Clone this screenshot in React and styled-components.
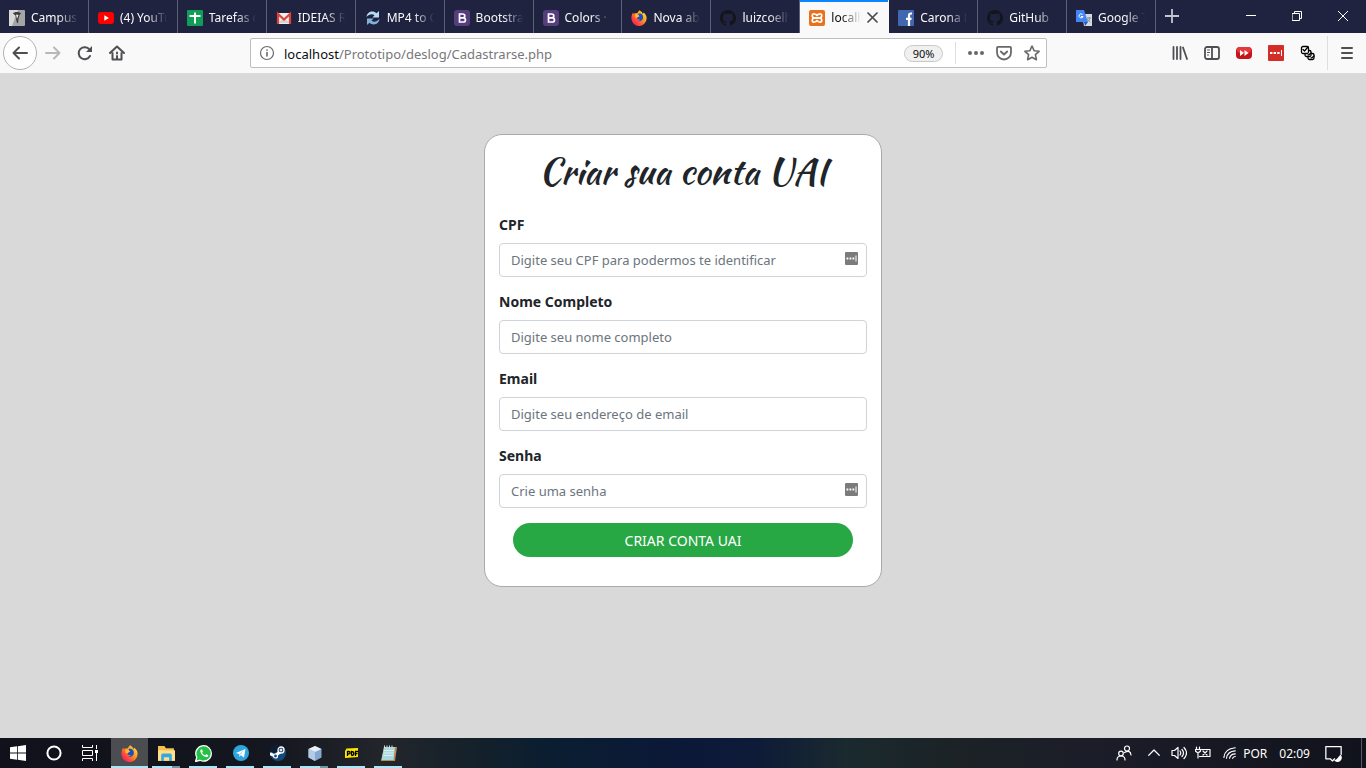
import React from "react";
import styled, { createGlobalStyle, css } from "styled-components";

const ui = '"Segoe UI", "Noto Sans", "Open Sans", sans-serif';

const GlobalStyle = createGlobalStyle`
  * { box-sizing: border-box; }
  html, body { margin: 0; padding: 0; }
  body { font-family: ${ui}; background: #d9d9d9; }
  button, input { font-family: inherit; margin: 0; }
  svg { display: block; flex: none; }
`;

const Screen = styled.div`
  min-height: 100vh;
  display: flex;
  flex-direction: column;
`;

const TitleBar = styled.header`
  display: flex;
  height: 33px;
  background: #202340;
`;

const TabList = styled.nav`
  display: flex;
  flex: 1;
  min-width: 0;
`;

const Tab = styled.a`
  flex: 1 1 0;
  min-width: 0;
  display: flex;
  align-items: center;
  gap: 6px;
  padding: 2px 10px 0 9px;
  font-size: 12px;
  color: #f9f9fa;
  text-decoration: none;
  border-right: 1px solid #5d5f75;
  ${(p) =>
    p.$active &&
    css`
      background: #f9f9fa;
      color: #0c0c0d;
      border-right-color: #f9f9fa;
      box-shadow: inset 0 2px #0a84ff;
    `}
`;

const TabTitle = styled.span`
  flex: 1;
  min-width: 0;
  overflow: hidden;
  white-space: nowrap;
  mask-image: linear-gradient(to left, transparent, #000 20px);
`;

const IconButton = styled.button`
  display: flex;
  align-items: center;
  justify-content: center;
  flex: none;
  width: ${(p) => p.$w || 32}px;
  height: ${(p) => p.$h || 32}px;
  padding: 0;
  border: 0;
  background: none;
  color: ${(p) => p.$color || "#4f4f53"};
`;

const WindowButtons = styled.div`
  display: flex;
  margin-left: 40px;
`;

const NavBar = styled.div`
  display: flex;
  align-items: center;
  height: 41px;
  padding: 0 3px;
  background: #f9f9fa;
  border-bottom: 1px solid #dcdcdd;
`;

const BackButton = styled(IconButton)`
  border: 1px solid #b1b1b3;
  border-radius: 50%;
  background: #fff;
`;

const Spring = styled.div`
  flex: 0 1 117px;
`;

const AddressBar = styled.form`
  display: flex;
  align-items: center;
  flex: 1;
  min-width: 0;
  height: 30px;
  padding: 0 0 0 8px;
  background: #fff;
  border: 1px solid #bebebf;
  border-radius: 2px;
`;

const Address = styled.span`
  flex: 1;
  min-width: 0;
  margin-left: 9px;
  padding-top: 2px;
  font-size: 13px;
  line-height: 26px;
  color: #77777a;
  white-space: nowrap;
  overflow: hidden;
  b { font-weight: 400; color: #0c0c0d; }
`;

const ZoomLevel = styled.button`
  width: 39px;
  height: 17px;
  padding: 0;
  margin-right: 12px;
  border: 1px solid #c8c8c9;
  border-radius: 9px;
  background: #f0f0f1;
  font-size: 11px;
  line-height: 15px;
  color: #0c0c0d;
`;

const Divider = styled.span`
  width: 1px;
  height: ${(p) => p.$h}px;
  margin: 0 ${(p) => p.$right || 0}px 0 ${(p) => p.$left || 0}px;
  background: ${(p) => p.$color || "#dededf"};
`;

const Page = styled.main`
  flex: 1;
  padding: 60px 16px;
  background: #d9d9d9;
`;

const Card = styled.form`
  width: 100%;
  max-width: 398px;
  margin: 0 auto;
  padding: 12px 14px 29px;
  background: #fff;
  border: 1px solid #a9a9a9;
  border-radius: 18px;
`;

const Title = styled.h1`
  margin: 0 0 19px;
  font: 400 36px/48px "Kaushan Script", cursive;
  color: #212529;
  text-align: center;
  white-space: nowrap;
`;

const Field = styled.div`
  margin-bottom: 14px;
`;

const FieldLabel = styled.label`
  display: block;
  margin-bottom: 7px;
  font-size: 14px;
  font-weight: 700;
  line-height: 22px;
  color: #212529;
`;

const InputFrame = styled.div`
  display: flex;
  height: 34px;
  padding-right: 8px;
  border: 1px solid #ced4da;
  border-radius: 4px;
  svg { margin-top: 8px; }
`;

const Input = styled.input`
  flex: 1;
  min-width: 0;
  padding: 0 11px;
  border: 0;
  outline: 0;
  background: transparent;
  font-size: 13px;
  color: #495057;
  &::placeholder { color: #6c757d; opacity: 1; }
`;

const Submit = styled.button`
  display: block;
  width: calc(100% - 28px);
  height: 34px;
  margin: 15px auto 0;
  padding: 0;
  border: 0;
  border-radius: 17px;
  background: #28a745;
  color: #fff;
  font-size: 14px;
`;

const TaskBar = styled.footer`
  display: flex;
  justify-content: space-between;
  height: 30px;
  background: linear-gradient(90deg, #10111a 0%, #14171f 20%, #22262b 28%, #16212a 34%, #0a1e30 40%, #0b1838 50%, #0d1a38 55%, #1a2a2e 62%, #1c2226 70%, #1b1d28 80%, #10121c 100%);
`;

const TaskGroup = styled.div`
  display: flex;
  align-items: center;
  gap: ${(p) => p.$gap || 0}px;
`;

const AppButton = styled.button`
  position: relative;
  display: flex;
  align-items: center;
  justify-content: center;
  width: ${(p) => p.$w || 37}px;
  height: 30px;
  padding: 0;
  border: 0;
  background: ${(p) => (p.$active ? "#4b4d51" : "none")};
  color: #fff;
  &::after {
    content: "";
    display: ${(p) => (p.$running ? "block" : "none")};
    position: absolute;
    left: ${(p) => (p.$active ? 0 : 4)}px;
    right: ${(p) => (p.$active ? 0 : 5)}px;
    bottom: 0;
    height: 2px;
    background: ${(p) => (p.$multi ? "linear-gradient(90deg, #a6e8fa 70%, #6a98a6 70%)" : "#a6e8fa")};
  }
`;

const TrayText = styled.span`
  font-size: 12px;
  color: #fff;
  margin-right: ${(p) => p.$gap}px;
  white-space: nowrap;
`;

const Svg = ({ s = 16, w, h, vb = "0 0 16 16", children, ...rest }) => (
  <svg width={w || s} height={h || s} viewBox={vb} fill="none" aria-hidden="true" {...rest}>
    {children}
  </svg>
);
const Line = (props) => (
  <Svg stroke="currentColor" strokeWidth="1.8" strokeLinecap="round" strokeLinejoin="round" {...props} />
);

const Campus = () => (
  <Svg><rect width="16" height="16" rx="1" fill="#a5a5a5" /><path d="M0 0h9L3 16H0z" fill="#d8d8d8" /><path d="M4 3.500c1-2 7-2 8 0l-1.500 1.500L9.500 9 9 13H8L7 9 6.500 5.500z" fill="#3c3c3c" /><path d="M7 4.500l2.500.5L8 9z" fill="#eee" /></Svg>
);
const YouTube = () => (
  <Svg><rect y="2" width="16" height="12" rx="3" fill="#f00" /><path d="M6.300 5.200 11 8l-4.700 2.800z" fill="#fff" /></Svg>
);
const Sheets = () => (
  <Svg><rect width="16" height="16" rx="1" fill="#0f9d58" /><path d="M8 2.500v11M2.500 6h11" stroke="#fff" strokeWidth="2" /></Svg>
);
const Gmail = () => (
  <Svg><path d="M1 3h14v11H1z" fill="#eee" /><path d="M2 13 8 8l6 5z" fill="#d5d5d5" /><path d="M2 14V4L8 9.500 14 4V14" stroke="#db4437" strokeWidth="2.200" /></Svg>
);
const Sync = () => (
  <Svg><path d="M1.500 7C2 1.500 8 0 11.500 3.200L14 1v6.500H7.500L9.500 5.300C7 3.500 4 4.400 1.500 7z" fill="#b4dcf5" /><path d="M14.500 9C14 14.500 8 16 4.500 12.800L2 15V8.500h6.500l-2 2.200c2.500 1.800 5.500.9 8-1.700z" fill="#7fb2da" /></Svg>
);
const Bootstrap = () => (
  <Svg><rect width="16" height="16" rx="3" fill="#563d7c" /><path d="M5.500 4h3.200c2.800 0 2.800 3.800 0 3.800H5.500zM5.500 7.800h3.700c3 0 3 4.200 0 4.200H5.500z" stroke="#fff" strokeWidth="1.700" /></Svg>
);
const Firefox = ({ s = 16 }) => (
  <Svg s={s}>
    <defs><linearGradient id="ff" x1="1" y1="0" x2="0" y2="1"><stop stopColor="#fff44f" /><stop offset=".4" stopColor="#ff9a1f" /><stop offset=".75" stopColor="#ff3647" /><stop offset="1" stopColor="#e31587" /></linearGradient></defs>
    <path d="M8.500.3c2 1.200 3 2.300 3.300 3.700l.9-1.500c2 1.800 3 3.600 2.900 6A7.600 7.600 0 0 1 .4 8.400C.3 6 1 3.800 2.200 2.400l.5 1.500C4 2.900 5.400 2.900 6.400 3 7 1.900 7.700 1.100 8.500.3z" fill="url(#ff)" />
    <path d="M7.500 3.600c3.500-.6 5 2 4.500 4.600-.5 2.500-3.500 3.800-6 2.600 2 .2 3-.6 3.300-1.400-1.600.1-3-.1-3.200-1.500C6 7 7.500 7 8.500 6.300 7.500 6 7 5 7.500 3.600z" fill="#174fc4" />
    <path d="M4 4.400C6 4 7.800 5 8.500 6.300 7.300 6.700 6 7 6.200 8l-2-.8z" fill="#ffbd2e" />
  </Svg>
);
const GitHub = () => (
  <Svg><path fill="#14151b" d="M8 0C3.580 0 0 3.580 0 8c0 3.540 2.290 6.530 5.470 7.590.4.070.55-.17.55-.38v-1.490c-2.010.37-2.530-.49-2.690-.94-.09-.23-.48-.94-.82-1.130-.28-.15-.68-.52-.01-.53.63-.01 1.080.58 1.230.82.72 1.210 1.870.87 2.330.66.07-.52.28-.87.51-1.070-1.780-.2-3.640-.89-3.640-3.950 0-.87.31-1.590.82-2.150-.08-.2-.36-1.020.08-2.120 0 0 .67-.21 2.200.82a7.600 7.600 0 0 1 4 0c1.530-1.040 2.200-.82 2.200-.82.44 1.100.16 1.920.08 2.120.51.56.82 1.270.82 2.150 0 3.070-1.870 3.750-3.650 3.950.29.25.54.73.54 1.480v2.200c0 .21.15.46.55.38A8 8 0 0 0 8 0z" /></Svg>
);
const Xampp = () => (
  <Svg><rect width="16" height="16" rx="2" fill="#e9711c" /><path d="M6.500 4.200Q3.300 3 3.300 5.500T5 7.800h6q1.700 0 1.700-2.300T9.500 4.200L8 5.500 6.500 4.200M6.500 11.800Q3.300 13 3.300 10.500T5 8.200h6q1.700 0 1.700 2.300T9.500 11.800L8 10.500 6.500 11.800" stroke="#fff" strokeWidth="1.700" /></Svg>
);
const Facebook = () => (
  <Svg><rect width="16" height="16" rx="1" fill="#4267b2" /><path d="M14 3.500h-1c-1.500 0-2 .7-2 2V16M8 8.800h5.500" stroke="#fff" strokeWidth="2.200" /></Svg>
);
const Translate = () => (
  <Svg><path d="M6 4h10v12H8z" fill="#d5dbe0" /><path d="M0 0h8l4 12H0z" fill="#4285f4" /><path d="M8 12h4l-3 4z" fill="#2358b8" /><path d="M6.500 4.500A2 2 0 1 0 7 6.500H5" stroke="#fff" /><path d="M11 8h4m-2-1v1m1 0c-.5 2-1.500 3-3 4m.5-3c.5 1.500 1.500 2.500 3 3" stroke="#71808c" strokeWidth=".8" /></Svg>
);

const tabs = [
  ["Campus", Campus],
  ["(4) YouTu", YouTube],
  ["Tarefas d", Sheets],
  ["IDEIAS RA", Gmail],
  ["MP4 to G", Sync],
  ["Bootstrap", Bootstrap],
  ["Colors · B", Bootstrap],
  ["Nova aba", Firefox],
  ["luizcoelh", GitHub],
  ["localh", Xampp, true],
  ["Carona L", Facebook],
  ["GitHub", GitHub],
  ["Google T", Translate],
];

const Dots = () => (
  <Svg s={13} vb="0 0 13 13"><rect width="13" height="13" rx="1" fill="#7b7b7b" /><path d="M1.500 6.500h1.800M4.500 6.500h1.800M7.500 6.500h1.800" stroke="#fff" strokeWidth="1.800" /><path d="M11 3.500v6" stroke="#fff" /></Svg>
);

const fields = [
  ["cpf", "CPF", "Digite seu CPF para podermos te identificar", "text", true],
  ["nome", "Nome Completo", "Digite seu nome completo", "text"],
  ["email", "Email", "Digite seu endereço de email", "email"],
  ["senha", "Senha", "Crie uma senha", "password", true],
];

const Windows = () => <Svg><path fill="#fff" d="M0 2.300 7 1.300V7.600H0zM7.800 1.200 16 0v7.600H7.800zM0 8.400h7v6.300l-7-1zM7.800 8.400H16V16l-8.200-1.200z" /></Svg>;
const Cortana = () => <Svg><circle cx="8" cy="8" r="6.600" stroke="#fff" strokeWidth="2" /></Svg>;
const TaskView = () => <Svg stroke="#fff"><path d="M.5 0v2.500h10V0M.5 16v-2.500h10V16M.5 5.500h10v5H.5zM14.500 0v4M14.500 8v8" /><path d="M13 5h3v3h-3z" fill="#fff" stroke="none" /></Svg>;
const Folder = () => <Svg s={17}><path d="M0 1h6l1.500 2H15v11H0z" fill="#f5c04d" /><path d="M0 5h16v10H0z" fill="#ffe08a" /><path d="M3 15V9.500Q3 8 4.500 8h7Q13 8 13 9.500V15h-2.500v-3.500h-5V15z" fill="#36a8e0" /></Svg>;
const WhatsApp = () => <Svg s={17}><path d="M.5 15.500 1.700 11.500A7.300 7.300 0 1 1 4.700 14.400z" fill="#25c045" stroke="#fff" strokeWidth="1.200" /><path d="M5.500 4.200c-2 1.800 2.500 8 6 7 1-.4 1.200-1.200.8-1.700l-1.600-.8-1.200 1C8 9.200 7 8 6.700 7l.7-1-.7-1.700z" fill="#fff" /></Svg>;
const Telegram = () => <Svg><circle cx="8" cy="8" r="8" fill="#2ca5e0" /><path d="M2.800 8 12.500 4 11 12.500 7.800 10.300 6.300 11.800 6 9z" fill="#fff" /><path d="m6 9 5-4-3.500 4.500-1.200 2.300z" fill="#b7d9ec" /></Svg>;
const Steam = () => <Svg><circle cx="8" cy="8" r="8" fill="#134a7c" /><path d="M.5 4.500A8 8 0 0 1 12 1L9 5 5 8 0 7z" fill="#0d1d33" /><path d="m0 8.500 5 2.500 5.500-4.500" stroke="#fff" strokeWidth="3" /><circle cx="11" cy="5" r="3" fill="#1c3450" stroke="#fff" strokeWidth="1.300" /><circle cx="11" cy="5" r="1.500" fill="#dfe6ee" /><circle cx="5.500" cy="11" r="2" fill="#134a7c" stroke="#fff" strokeWidth="1.200" /></Svg>;
const Cube = () => <Svg><path d="m8 1 6.500 3v8.500L8 16l-6.500-3.500V4z" fill="#86a7cf" /><path d="m8 1 6.500 3L8 7 1.500 4z" fill="#e6eef6" /><path d="M1.500 4 8 7v9l-6.500-3.500z" fill="#b5cae4" /></Svg>;
const Pdf = () => <Svg><path d="M2.500 3.500 14 3v9L1 13V6z" fill="#ffe800" /><path d="M3.500 11V6.500H5q1 0 1 1.200T5 8.900H3.500M7.500 10.500v-4q2.300 0 2.300 2t-2.300 2M11.500 11V6.500H14M11.500 8.700h2" stroke="#000" strokeWidth="1.300" /></Svg>;
const Notepad = () => <Svg><path d="M3 2h13l-2 14H0z" fill="#b98b55" /><path d="M3 2h11l-1.500 13H.5z" fill="#a8d7dc" /><path d="M3 5.500h10M2.700 8h10M2.300 10.500h10" stroke="#d8f0f2" /><path d="M3.500.5v3m2.500-3v3m2.500-3v3m2.500-3v3" stroke="#ddd" /></Svg>;

const apps = [
  ["Firefox", () => <Firefox s={17} />, false, true],
  ["Explorador", Folder, true],
  ["WhatsApp", WhatsApp],
  ["Telegram", Telegram],
  ["Steam", Steam],
  ["VirtualBox", Cube, true],
  ["PDF", Pdf],
  ["Bloco de notas", Notepad],
];

export default function App() {
  return (
    <Screen>
      <GlobalStyle />
      <TitleBar>
        <TabList aria-label="Abas">
          {tabs.map(([name, Icon, active], i) => (
            <Tab key={i} href="#" $active={active}>
              <Icon />
              <TabTitle>{name}</TabTitle>
              {active && <Line s={11} vb="0 0 11 11" stroke="#4a4a4f" strokeWidth="1.700"><path d="m1 1 9 9M10 1 1 10" /></Line>}
            </Tab>
          ))}
        </TabList>
        <IconButton $color="#c5c6ce" aria-label="Nova aba"><Line s={14} vb="0 0 14 14" strokeLinecap="butt"><path d="M7 0v14M0 7h14" /></Line></IconButton>
        <WindowButtons>
          <IconButton $w={46} $color="#fff" aria-label="Minimizar"><Line s={10} vb="0 0 10 10" strokeWidth="1"><path d="M0 4.500h10" /></Line></IconButton>
          <IconButton $w={46} $color="#fff" aria-label="Restaurar"><Line s={10} vb="0 0 10 10" strokeWidth="1" strokeLinejoin="miter"><path d="M.5 2.500h7v7h-7zM2.500 2.500v-2h7v7h-2" /></Line></IconButton>
          <IconButton $w={46} $color="#fff" aria-label="Fechar"><Line s={10} vb="0 0 10 10" strokeWidth="1"><path d="m0 0 10 10M10 0 0 10" /></Line></IconButton>
        </WindowButtons>
      </TitleBar>
      <NavBar>
        <BackButton $w={34} $h={34} aria-label="Voltar"><Line strokeWidth="2"><path d="M15 8H1.500M7 2.500 1.500 8 7 13.500" /></Line></BackButton>
        <IconButton $color="#b8b8ba" aria-label="Avançar"><Line strokeWidth="2"><path d="M1 8h13.500M9 2.500 14.500 8 9 13.500" /></Line></IconButton>
        <IconButton aria-label="Recarregar"><Line strokeWidth="2"><path d="M13 11A6 6 0 1 1 12.500 4.500" /><path d="M15 1v6H9z" fill="currentColor" stroke="none" /></Line></IconButton>
        <IconButton aria-label="Início"><Line strokeWidth="2"><path d="m1 8 7-6.500L15 8M3.500 8v6.500h9V8M8 14.500V11" /><path d="M8 7.500v1" /></Line></IconButton>
        <Spring />
        <AddressBar onSubmit={(e) => e.preventDefault()}>
          <Line color="#6a6a6d" strokeWidth="1.200"><circle cx="8" cy="8" r="6.500" /><path d="M8 7.500v3.500M8 5v.2" strokeWidth="1.600" /></Line>
          <Address><b>localhost</b>/Prototipo/deslog/Cadastrarse.php</Address>
          <ZoomLevel type="button">90%</ZoomLevel>
          <Divider $h={22} $right={6} />
          <IconButton type="button" $w={28} $h={28} $color="#68686b" aria-label="Ações"><Svg><g fill="currentColor"><circle cx="2" cy="8" r="2" /><circle cx="8" cy="8" r="2" /><circle cx="14" cy="8" r="2" /></g></Svg></IconButton>
          <IconButton type="button" $w={28} $h={28} $color="#68686b" aria-label="Pocket"><Line><path d="M2 1.800h12q1 0 1 1V7.500a7 7 0 0 1-14 0V2.800q0-1 1-1zM4.800 6.500 8 9.500l3.200-3" /></Line></IconButton>
          <IconButton type="button" $w={28} $h={28} $color="#68686b" aria-label="Favoritos"><Line strokeWidth="1.600"><path d="m8 1 2.100 4.700 5 .6-3.700 3.400 1 5L8 12.200 3.600 14.700l1-5L.9 6.300l5-.6z" /></Line></IconButton>
        </AddressBar>
        <Spring />
        <IconButton aria-label="Biblioteca"><Line strokeWidth="1.800"><path d="M1.500 2v12M5 2v12M8.500 2v12M11 2.500 15 14" /></Line></IconButton>
        <IconButton aria-label="Painel"><Line><rect x="1" y="2" width="14" height="12" rx="2" /><path d="M8 2v12" /><path d="M3.500 5h2M3.500 7.500h2M3.500 10h1" strokeWidth="1" /></Line></IconButton>
        <IconButton aria-label="Player"><Svg><rect y="2" width="16" height="12" rx="4" fill="#c4151b" /><rect x="1" y="2" width="14" height="6" rx="3" fill="#e5383d" /><path d="m4 5 4 3-4 3zM8.500 5l4 3-4 3z" fill="#fff" /></Svg></IconButton>
        <IconButton aria-label="LastPass"><Svg><rect width="16" height="16" rx="1" fill="#d32d27" /><path d="M2 8h2.400M5.600 8H8M9.200 8h2.400" stroke="#fff" strokeWidth="2.200" /><path d="M13.500 5v6" stroke="#fff" /></Svg></IconButton>
        <IconButton aria-label="Tarefas" $color="#000"><Line strokeWidth="1.300"><g fill="#fff"><rect x="8" y="8.500" width="6" height="6" rx="1.500" /><rect x="5" y="5.500" width="6" height="6" rx="1.500" /><rect x="1.500" y="1.500" width="7" height="7" rx="1.500" /></g><path d="m3 4.500 1.500 1.500L8 2M8 9.800h1L11 8M11 12.800h1l2-1.800" /></Line></IconButton>
        <Divider $h={34} $left={3} $right={3} />
        <IconButton aria-label="Menu"><Line s={14} vb="0 0 14 14" strokeWidth="2"><path d="M2 2h10M2 7h10M2 12h10" /></Line></IconButton>
      </NavBar>
      <Page>
        <Card onSubmit={(e) => e.preventDefault()}>
          <Title>Criar sua conta UAI</Title>
          {fields.map(([id, label, hint, type, icon]) => (
            <Field key={id}>
              <FieldLabel htmlFor={id}>{label}</FieldLabel>
              <InputFrame>
                <Input id={id} type={type} placeholder={hint} />
                {icon && <Dots />}
              </InputFrame>
            </Field>
          ))}
          <Submit>CRIAR CONTA UAI</Submit>
        </Card>
      </Page>
      <TaskBar>
        <TaskGroup $gap={3}>
          <TaskGroup>
            <AppButton $w={36} aria-label="Iniciar"><Windows /></AppButton>
            <AppButton $w={36} aria-label="Cortana"><Cortana /></AppButton>
            <AppButton $w={36} aria-label="Visão de tarefas"><TaskView /></AppButton>
          </TaskGroup>
          <TaskGroup>
            {apps.map(([name, Icon, multi, active]) => (
              <AppButton key={name} aria-label={name} $running $multi={multi} $active={active}><Icon /></AppButton>
            ))}
          </TaskGroup>
        </TaskGroup>
        <TaskGroup>
          <AppButton $w={30} aria-label="Pessoas"><Line strokeWidth="1.200"><circle cx="5" cy="8.500" r="2.300" /><path d="M1 15q0-4 4-4t4 4" /><circle cx="11" cy="3.500" r="2.500" /><path d="M8.500 7.500Q14.500 4.500 15 10" /></Line></AppButton>
          <AppButton $w={30} aria-label="Mostrar ícones"><Line s={12} strokeWidth="1.600"><path d="m1 11 7-7 7 7" /></Line></AppButton>
          <AppButton $w={20} aria-label="Volume"><Line strokeWidth="1.200"><path d="M1 5.500h2.500L7 2.500v11L3.500 10.500H1zM9 6q1.500 2 0 4M11 4.500q3 3.500 0 7M13 2.500q5 5.500 0 11" /></Line></AppButton>
          <AppButton $w={28} aria-label="Bateria"><Line strokeWidth="1.200"><path d="M1.500 2v2m3-2v2M.5 4.500h5v1.500q-2.500 3-5 0zM3 7.500V13M6.500 4.500H15v7H4.500M8 6l4 4m0-4-4 4" /></Line></AppButton>
          <AppButton $w={26} aria-label="Wi-Fi"><Line s={14} strokeWidth="1.400"><path d="M1 13Q2 3 14 2M4 14Q5 6 14 5.500M7.500 14Q8.500 9 14 9M11 14q1-2 3-2" /></Line></AppButton>
          <TrayText $gap={12}>POR</TrayText>
          <TrayText $gap={8}>02:09</TrayText>
          <AppButton $w={30} aria-label="Notificações"><Line strokeWidth="1.200" s={17}><path d="M9 13 7 15l-2-2H.8V1.500h14.400V9" /><path d="M14.500 10q-4 5-5 4.500 3 2 5-.5 1.500-2 0-4z" fill="#fff" /></Line></AppButton>
          <Divider $h={30} $left={13} $right={4} $color="#555860" />
        </TaskGroup>
      </TaskBar>
    </Screen>
  );
}
